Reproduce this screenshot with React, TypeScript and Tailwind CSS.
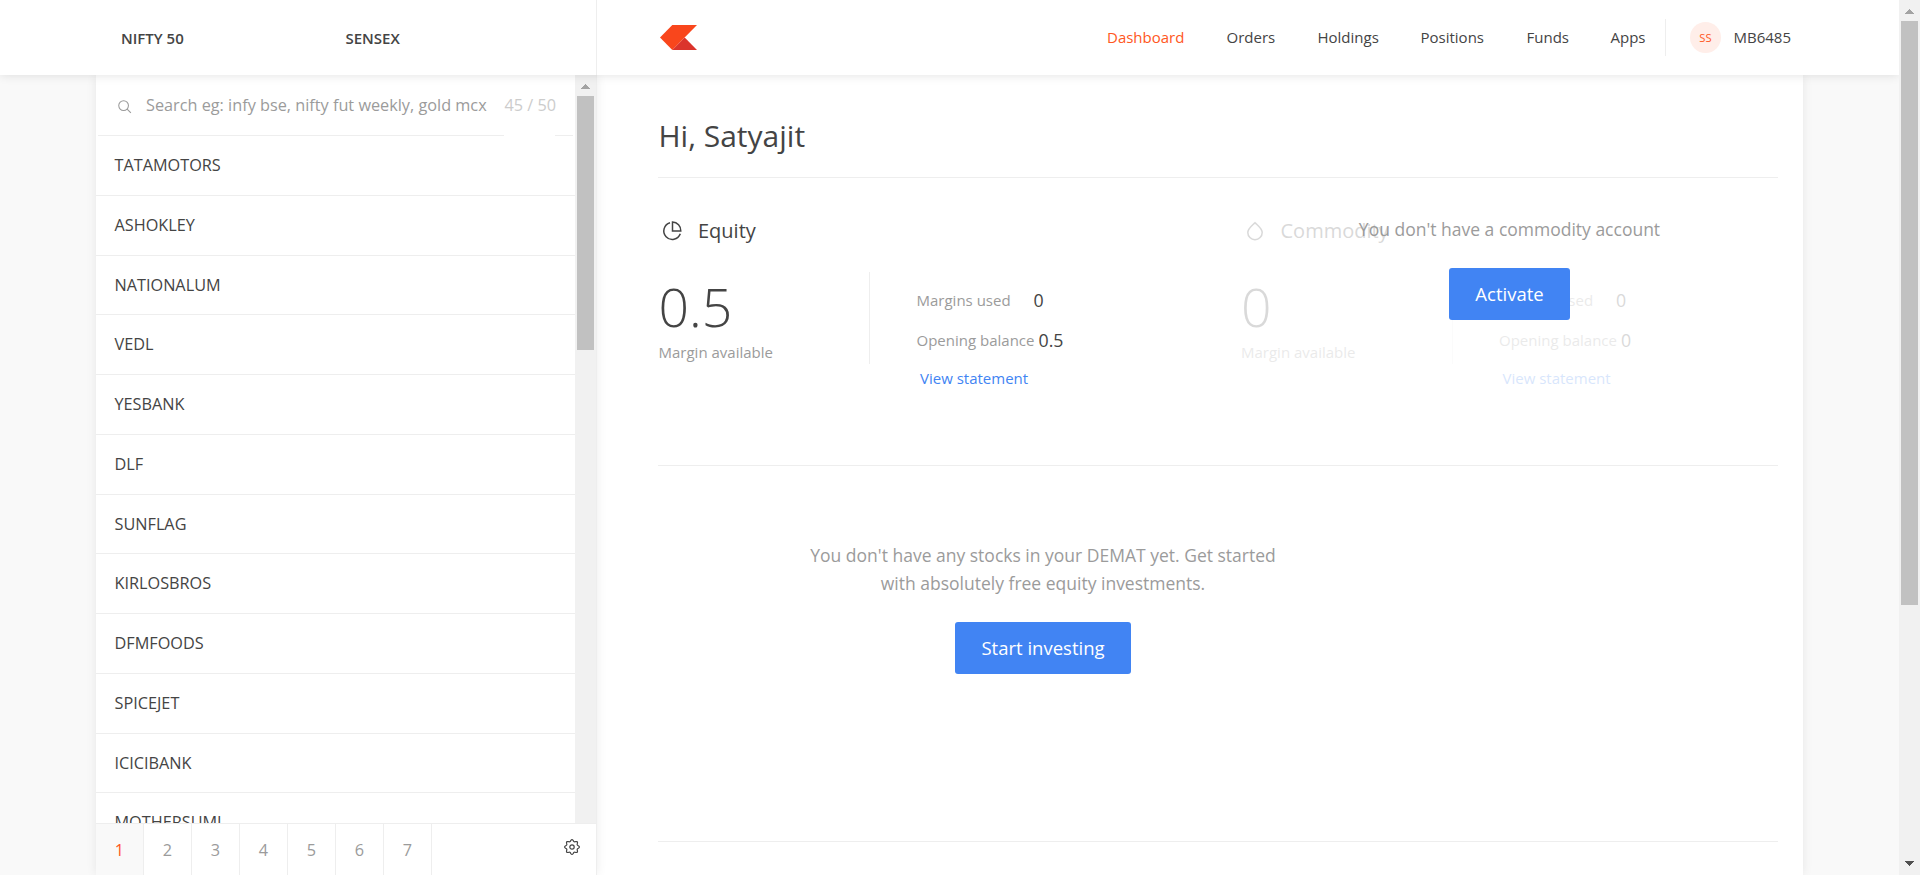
import React from "react";

const STOCKS = [
  "TATAMOTORS",
  "ASHOKLEY",
  "NATIONALUM",
  "VEDL",
  "YESBANK",
  "DLF",
  "SUNFLAG",
  "KIRLOSBROS",
  "DFMFOODS",
  "SPICEJET",
  "ICICIBANK",
  "MOTHERSUMI",
];

const PAGES = ["1", "2", "3", "4", "5", "6", "7"];

const NAV = [
  { label: "Dashboard", box: "w-[119.5px] text-[#ff5722]" },
  { label: "Orders", box: "w-[91px]" },
  { label: "Holdings", box: "w-[103px]" },
  { label: "Positions", box: "w-[106px]" },
  { label: "Funds", box: "w-[84px]" },
  { label: "Apps", box: "w-[54.5px]" },
];

// Eight rounded teeth: the radius swings with the cosine of eight times the angle.
const GEAR_POINTS = Array.from({ length: 96 }, (_, i) => {
  const a = (i / 96) * Math.PI * 2;
  const r = 6.5 + 0.85 * Math.cos(8 * a);
  return `${(8 + r * Math.cos(a)).toFixed(2)},${(8 + r * Math.sin(a)).toFixed(2)}`;
}).join(" ");

function ArrowUp() {
  return (
    <svg className="block" width="9" height="5" viewBox="0 0 9 5" shapeRendering="crispEdges">
      <path d="M4 0h1v1h1v1h1v1h1v1h1v1H0V4h1V3h1V2h1V1h1z" fill="#a3a3a3" />
    </svg>
  );
}

function ArrowDown() {
  return (
    <svg className="block" width="9" height="5" viewBox="0 0 9 5" shapeRendering="crispEdges">
      <path d="M0 0h9v1H8v1H7v1H6v1H5v1H4V4H3V3H2V2H1V1H0z" fill="#505050" />
    </svg>
  );
}

function Header() {
  return (
    <header className="relative z-10 flex h-[75px] w-[1899px] shrink-0 bg-white shadow-[0_0_10px_rgba(0,0,0,0.12)]">
      <div className="flex h-full w-[597px] items-center border-r border-[#eeeeee] pl-[121px] pt-[2px] text-[15px] font-semibold">
        <span className="w-[224.5px]">NIFTY 50</span>
        <span>SENSEX</span>
      </div>
      <div className="flex h-full flex-1 items-center pl-[63px] text-[15px]">
        <svg className="block" width="37" height="25" viewBox="0 0 37 25">
          <path d="M12.3 0H37L12.3 25 0 12.5z" fill="#f9461c" />
          <path d="M24.7 12.5 37 25H12.3z" fill="#db342c" />
        </svg>
        <nav className="ml-[410px] flex">
          {NAV.map((n) => (
            <a key={n.label} className={n.box}>
              {n.label}
            </a>
          ))}
        </nav>
        <div className="h-[37px] w-px bg-[#eeeeee]" />
        <div className="ml-[24px] flex h-[31px] w-[31px] items-center justify-center rounded-full bg-[#ffeee9] pt-px text-[11.25px] text-[#ff5722]">
          SS
        </div>
        <span className="ml-[12.5px]">MB6485</span>
      </div>
    </header>
  );
}

function Watchlist() {
  return (
    <aside className="relative flex h-[800px] w-[501px] flex-col border-r border-[#eeeeee] bg-white shadow-[0_0_10px_rgba(0,0,0,0.08)]">
      <div className="flex h-[748px] overflow-hidden">
        <div className="w-[479px]">
          <div className="flex h-[60px] pl-[22px] text-[16.25px] leading-[60px]">
            <svg className="mt-[25px] block" width="14" height="14" viewBox="0 0 15 15" fill="none" stroke="#999999" strokeWidth="1.1">
              <circle cx="6" cy="6" r="5.2" />
              <path d="M9.8 9.8 13.8 13.8" />
            </svg>
            <span className="ml-[14px] w-[358.500px] whitespace-nowrap text-[#9b9b9b]">
              Search eg: infy bse, nifty fut weekly, gold mcx
            </span>
            <span className="text-[#cccccc]">45 / 50</span>
          </div>
          <div className="mx-[2px] flex h-px justify-between">
            <div className="w-[406px] bg-[#eeeeee]" />
            <div className="w-[18px] bg-[#eeeeee]" />
          </div>
          {STOCKS.map((s) => (
            <div key={s} className="h-[59.75px] border-b border-[#eeeeee] pl-[18.500px] text-[16.25px] leading-[59px]">
              {s}
            </div>
          ))}
        </div>
        <div className="flex w-[21px] flex-col items-center bg-[#f1f1f1] pt-[9px]">
          <ArrowUp />
          <div className="mt-[7px] h-[254px] w-[17px] bg-[#c1c1c1]" />
        </div>
      </div>
      <div className="flex h-[52px] border-t border-[#eeeeee] text-[16.25px] leading-[53px]">
        {PAGES.map((p) => (
          <div
            key={p}
            className={
              p === "1"
                ? "w-[48px] border-r border-[#eeeeee] bg-[#f9f9f9] text-center text-[#ff5722]"
                : "w-[48px] border-r border-[#eeeeee] text-center text-[#9b9b9b]"
            }
          >
            {p}
          </div>
        ))}
        <svg className="ml-auto mr-[16px] mt-[15px] block" width="16" height="16" viewBox="0 0 16 16" fill="none" stroke="#444444" strokeWidth="1.2">
          <circle cx="8" cy="8" r="2.200" />
          <polygon points={GEAR_POINTS} />
        </svg>
      </div>
    </aside>
  );
}

type AccountProps = { title: string; value: string; icon: React.ReactNode; className: string };

function Account({ title, value, icon, className }: AccountProps) {
  return (
    <div className={className}>
      <div className="flex h-[30px] items-center text-[20px]">
        <div className="w-[40px] pl-[4px]">{icon}</div>
        <span>{title}</span>
      </div>
      <div className="mt-[26px] flex h-[92px]">
        <div className="w-[211px]">
          <div className="mt-[2px] h-[65px] pl-[0.5px] text-[53.5px] font-light leading-[65px]">{value}</div>
          <div className="pl-[0.5px] text-[15px] leading-[26px] text-[#9b9b9b]">Margin available</div>
        </div>
        <div className="w-px bg-[#eeeeee]" />
        <div className="pl-[46.500px] pt-[8px]">
          <div className="flex h-[40px] items-center text-[15px] text-[#9b9b9b]">
            <span className="w-[117px]">Margins used</span>
            <span className="text-[17.75px] text-[#444444]">0</span>
          </div>
          <div className="flex h-[40px] items-center text-[15px] text-[#9b9b9b]">
            <span className="w-[122px] whitespace-nowrap">Opening balance</span>
            <span className="text-[17.75px] text-[#444444]">{value}</span>
          </div>
          <div className="pl-[3.500px] text-[15px] leading-[36px] text-[#4184f3]">View statement</div>
        </div>
      </div>
    </div>
  );
}

function Dashboard() {
  return (
    <main className="h-[800px] w-[1206px] bg-white pl-[61px] pr-[25px] shadow-[0_0_10px_rgba(0,0,0,0.08)]">
      <h1 className="h-[102px] pl-[0.5px] pt-[41px] text-[30px] leading-[40px]">Hi, Satyajit</h1>
      <div className="h-px bg-[#eeeeee]" />
      <section className="relative flex h-[287px] pt-[38px]">
        <Account
          title="Equity"
          value="0.5"
          className="w-[582.500px]"
          icon={
            <svg className="block" width="20" height="20" viewBox="0 0 20 20" fill="none" stroke="#444444" strokeWidth="1.5">
              <path d="M8 1.700A8.500 8.500 0 1 0 18.300 12.800" />
              <path d="M10.500 1v9h8.300A8.500 8.500 0 0 0 10.500 1z" />
            </svg>
          }
        />
        <Account
          title="Commodity"
          value="0"
          className="opacity-20"
          icon={
            <svg className="block" width="19" height="20" viewBox="0 0 19 20" fill="none" stroke="#444444" strokeWidth="1.500">
              <path d="M10 1.700C7.500 4.200 2.800 7.500 2.800 11.500a7.200 7.200 0 0 0 14.400 0C17.200 7.500 12.500 4.200 10 1.700z" />
            </svg>
          }
        />
        <div className="absolute left-[569px] top-[36px] flex w-[565px] flex-col items-center">
          <p className="text-[17.500px] leading-[30px] text-[#9b9b9b]">You don't have a commodity account</p>
          <button className="mt-[24px] h-[52px] w-[121px] rounded-[3px] bg-[#4184f3] text-[18.500px] font-medium text-white">
            Activate
          </button>
        </div>
      </section>
      <div className="h-px bg-[#eeeeee]" />
      <section className="flex h-[375px] w-[770px] flex-col items-center pt-[75px]">
        <p className="text-center text-[17.500px] leading-[28px] text-[#9b9b9b]">
          You don't have any stocks in your DEMAT yet. Get started
          <br />
          with absolutely free equity investments.
        </p>
        <button className="mt-[25px] h-[52px] w-[176px] rounded-[3px] bg-[#4184f3] text-[18.500px] font-medium text-white">
          Start investing
        </button>
      </section>
      <div className="h-px bg-[#eeeeee]" />
    </main>
  );
}

export default function App() {
  return (
    <div className="flex h-[875px] w-[1920px] overflow-hidden bg-[#f9f9f9] font-['Open_Sans',sans-serif] text-[#444444]">
      <div className="flex w-[1899px] flex-col overflow-hidden">
        <Header />
        <div className="flex pl-[96px]">
          <Watchlist />
          <Dashboard />
        </div>
      </div>
      <div className="relative z-20 flex h-full w-[21px] flex-col items-center bg-[#f1f1f1] pb-[9px] pt-[9px]">
        <ArrowUp />
        <div className="mt-[7px] h-[584px] w-[17px] bg-[#c1c1c1]" />
        <div className="mt-auto">
          <ArrowDown />
        </div>
      </div>
    </div>
  );
}
